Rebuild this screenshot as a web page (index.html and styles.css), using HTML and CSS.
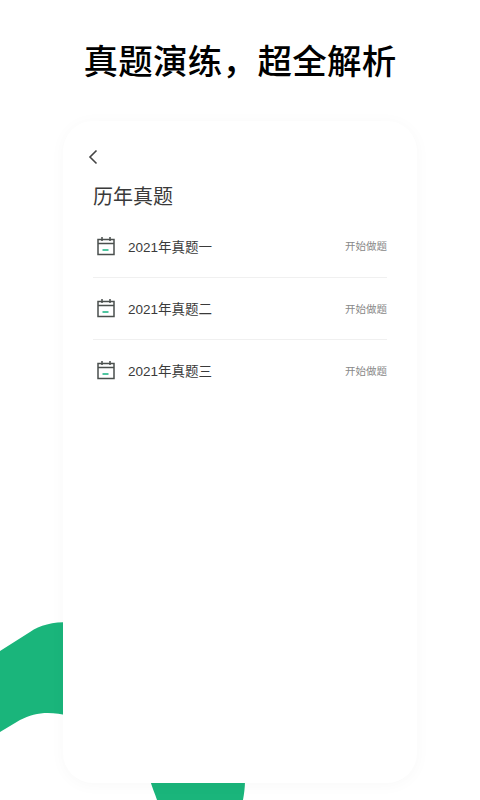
FILE: index.html
```html
<!DOCTYPE html>
<html lang="zh-CN">
<head>
<meta charset="utf-8">
<title>真题演练</title>
<link rel="stylesheet" href="styles.css">
</head>
<body>
<svg class="decor" width="480" height="800" viewBox="0 0 480 800" aria-hidden="true">
  <path class="wave" d="M0 651 L30 632 C40 625 52 622 70 622 L70 716 C50 711 35 712 20 720 L0 732 Z"/>
  <path class="wave" d="M150 780 L245 780 C245 788 244 794 243 800 L157 800 C155 794 152 787 150 780 Z"/>
</svg>
<main class="page">
  <h1 class="headline">真题演练，超全解析</h1>
  <section class="card">
    <svg class="back" width="12" height="16" viewBox="0 0 12 16"><path d="M9.5 1.5 L3 8 L9.5 14.5"/></svg>
    <h2 class="title">历年真题</h2>
    <ul class="list">
      <li class="row">
        <svg class="cal" width="20" height="20" viewBox="0 0 20 20"><path class="cal-line" d="M2 3.5H18V18.5H2ZM2 7.5H18M6 1V5M14 1V5"/><path class="cal-mark" d="M6.5 14H12.5"/></svg>
        <span class="name">2021年真题一</span>
        <span class="action">开始做题</span>
      </li>
      <li class="row">
        <svg class="cal" width="20" height="20" viewBox="0 0 20 20"><path class="cal-line" d="M2 3.5H18V18.5H2ZM2 7.5H18M6 1V5M14 1V5"/><path class="cal-mark" d="M6.5 14H12.5"/></svg>
        <span class="name">2021年真题二</span>
        <span class="action">开始做题</span>
      </li>
      <li class="row">
        <svg class="cal" width="20" height="20" viewBox="0 0 20 20"><path class="cal-line" d="M2 3.5H18V18.5H2ZM2 7.5H18M6 1V5M14 1V5"/><path class="cal-mark" d="M6.5 14H12.5"/></svg>
        <span class="name">2021年真题三</span>
        <span class="action">开始做题</span>
      </li>
    </ul>
  </section>
</main>
</body>
</html>
```
FILE: styles.css
```css
* { box-sizing: border-box; }
html, body { margin: 0; padding: 0; }
body {
  width: 480px;
  height: 800px;
  overflow: hidden;
  position: relative;
  background: #fff;
  font-family: "Liberation Sans", "Noto Sans CJK SC", sans-serif;
}
.decor { position: absolute; left: 0; top: 0; }
.wave { fill: #1ab57b; }
.page { position: relative; display: flex; flex-direction: column; align-items: center; }
.headline {
  margin: 0;
  padding-top: 39px;
  height: 121px;
  font-size: 34.5px;
  line-height: 46px;
  font-weight: 500;
  color: #000;
  letter-spacing: 0.3px;
}
.card {
  width: 354px;
  height: 662px;
  background: #fff;
  border-radius: 30px;
  box-shadow: 0 2px 16px rgba(0, 0, 0, 0.03);
  padding: 28px 30px 0 30px;
  display: flex;
  flex-direction: column;
}
.back { display: block; margin-left: -6px; fill: none; stroke: #444; stroke-width: 1.6; }
.title {
  margin: 18px 0 0;
  font-size: 20px;
  line-height: 28px;
  font-weight: 400;
  color: #3a3a3a;
}
.list { list-style: none; margin: 4.5px 0 0; padding: 0; }
.row {
  height: 62.4px;
  padding-bottom: 1px;
  display: flex;
  align-items: center;
  border-bottom: 1px solid #f0f0f0;
}
.row:last-child { border-bottom-color: transparent; }
.cal { margin-left: 3px; fill: none; stroke-width: 1.5; flex: none; }
.cal-line { stroke: #4a4f4d; }
.cal-mark { stroke: #3cc096; stroke-width: 1.8; }
.name { margin-left: 12px; font-size: 13.5px; color: #3a3a3a; flex: 1; }
.action { font-size: 10.5px; color: #888; }
```
